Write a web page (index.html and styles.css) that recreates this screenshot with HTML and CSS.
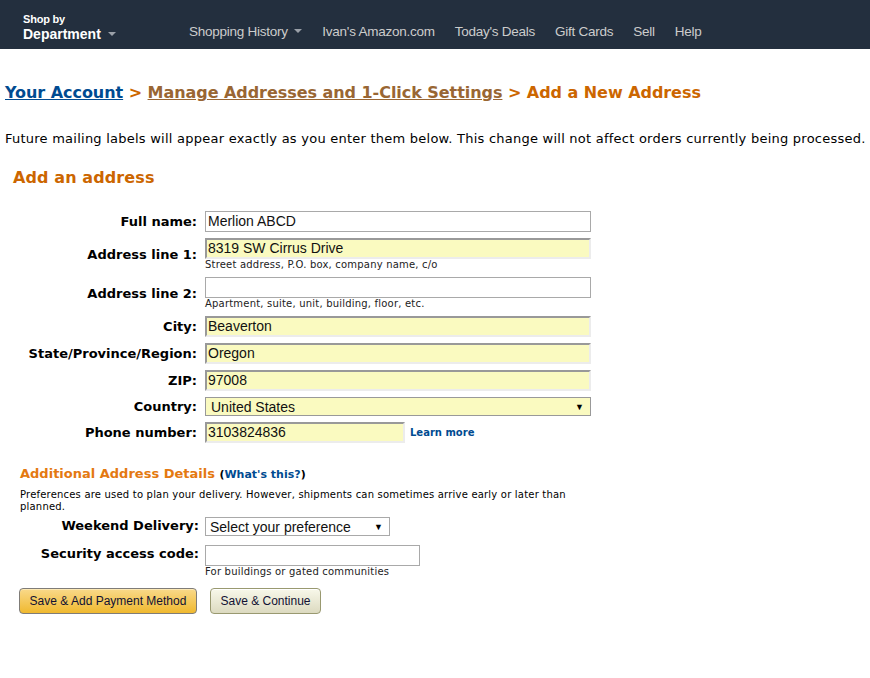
FILE: index.html
```html
<!DOCTYPE html>
<html lang="en">
<head>
<meta charset="utf-8">
<title>Add a New Address</title>
<link rel="stylesheet" href="styles.css">
</head>
<body>
<header class="nav">
  <div class="dept">
    <span class="dept-small">Shop by</span>
    <span class="dept-big">Department <span class="caret"></span></span>
  </div>
  <nav class="links">
    <a class="link">Shopping History <span class="caret"></span></a>
    <a class="link">Ivan's Amazon.com</a>
    <a class="link">Today's Deals</a>
    <a class="link">Gift Cards</a>
    <a class="link">Sell</a>
    <a class="link">Help</a>
  </nav>
</header>

<main class="page">
  <h1 class="crumbs"><a class="crumb-acct">Your Account</a> &gt; <a class="crumb-manage">Manage Addresses and 1-Click Settings</a> &gt; Add a New Address</h1>

  <p class="intro">Future mailing labels will appear exactly as you enter them below. This change will not affect orders currently being processed.</p>

  <h2 class="section-title">Add an address</h2>

  <div class="form">
    <label class="lbl">Full name:</label>
    <div class="field"><div class="inp white w-full">Merlion ABCD</div></div>

    <label class="lbl">Address line 1:</label>
    <div class="field"><div class="inp yellow w-full">8319 SW Cirrus Drive</div><div class="hint">Street address, P.O. box, company name, c/o</div></div>

    <label class="lbl">Address line 2:</label>
    <div class="field"><div class="inp white w-full"></div><div class="hint">Apartment, suite, unit, building, floor, etc.</div></div>

    <label class="lbl">City:</label>
    <div class="field"><div class="inp yellow w-full">Beaverton</div></div>

    <label class="lbl">State/Province/Region:</label>
    <div class="field"><div class="inp yellow w-full">Oregon</div></div>

    <label class="lbl">ZIP:</label>
    <div class="field"><div class="inp yellow w-full">97008</div></div>

    <label class="lbl">Country:</label>
    <div class="field"><div class="sel yellow-sel w-full"><span>United States</span><span class="tri">&#9660;</span></div></div>

    <label class="lbl">Phone number:</label>
    <div class="field row"><div class="inp yellow w-phone">3103824836</div><a class="learn">Learn more</a></div>
  </div>

  <h3 class="extra-title">Additional Address Details <span class="whats">(<a>What's this?</a>)</span></h3>
  <p class="pref">Preferences are used to plan your delivery. However, shipments can sometimes arrive early or later than planned.</p>

  <div class="form2">
    <label class="lbl2">Weekend Delivery:</label>
    <div class="field"><div class="sel white-sel w-week"><span>Select your preference</span><span class="tri">&#9660;</span></div></div>

    <label class="lbl2">Security access code:</label>
    <div class="field"><div class="inp white w-code"></div><div class="hint">For buildings or gated communities</div></div>
  </div>

  <div class="buttons">
    <button class="btn btn-primary">Save &amp; Add Payment Method</button>
    <button class="btn btn-secondary">Save &amp; Continue</button>
  </div>
</main>
</body>
</html>
```
FILE: styles.css
```css
html, body {
  margin: 0;
  padding: 0;
  background: #fff;
}
body {
  font-family: "DejaVu Sans", Verdana, sans-serif;
  color: #000;
}

/* top nav */
.nav {
  height: 49px;
  background: #232f3e;
  display: flex;
  align-items: flex-start;
  font-family: "Liberation Sans", Arial, sans-serif;
}
.dept {
  display: flex;
  flex-direction: column;
  padding: 13px 0 0 23px;
  width: 166px;
  color: #fff;
  font-weight: bold;
}
.dept-small {
  font-size: 11px;
  line-height: 13px;
  letter-spacing: -0.2px;
}
.dept-big {
  font-size: 14px;
  line-height: 16px;
}
.caret {
  display: inline-block;
  width: 0;
  height: 0;
  border-left: 4px solid transparent;
  border-right: 4px solid transparent;
  border-top: 4px solid #9aa0a8;
  vertical-align: middle;
  margin-left: 3px;
  margin-top: -2px;
}
.links {
  display: flex;
  gap: 20px;
  padding-top: 24px;
}
.link {
  color: #ccc;
  font-size: 13.5px;
  line-height: 16px;
  letter-spacing: -0.25px;
}

/* page */
.page {
  padding: 0 0 0 5px;
}
.crumbs {
  margin: 33px 0 0;
  font-size: 16px;
  line-height: 22px;
  font-weight: bold;
  color: #cc6600;
  letter-spacing: -0.05px;
}
.crumb-acct {
  color: #004b91;
  text-decoration: underline;
}
.crumb-manage {
  color: #996633;
  text-decoration: underline;
}
.intro {
  margin: 27px 0 0;
  font-size: 13px;
  line-height: 16px;
  color: #000;
  white-space: nowrap;
  letter-spacing: 0.24px;
}
.section-title {
  margin: 20px 0 0 8px;
  font-size: 16px;
  line-height: 22px;
  font-weight: bold;
  color: #cc6600;
  letter-spacing: 0.1px;
}

/* main form grid */
.form {
  display: grid;
  grid-template-columns: 192px auto;
  column-gap: 8px;
  row-gap: 6px;
  align-items: center;
  margin-top: 22px;
}
.lbl {
  text-align: right;
  font-size: 13px;
  font-weight: bold;
  color: #000;
  line-height: 16px;
}
.field {
  display: flex;
  flex-direction: column;
  align-items: flex-start;
}
.field.row {
  flex-direction: row;
  align-items: center;
}
.inp {
  box-sizing: border-box;
  height: 21px;
  font-family: "Liberation Sans", Arial, sans-serif;
  font-size: 14px;
  line-height: 17px;
  color: #111;
  padding: 0 2px;
  white-space: nowrap;
}
.white {
  background: #fff;
  border: 1px solid #a9a9a9;
  padding-top: 1px;
}
.yellow {
  background: #fafac0;
  border-top: 2px solid #999;
  border-left: 2px solid #999;
  border-bottom: 2px solid #ececec;
  border-right: 2px solid #ececec;
  padding-left: 1px;
}
.w-full { width: 386px; }
.w-phone { width: 200px; }
.w-code { width: 215px; }
.w-week { width: 185px; }
.hint {
  font-size: 10px;
  line-height: 12px;
  color: #222;
  letter-spacing: 0.2px;
  margin-top: 0;
}
.sel {
  box-sizing: border-box;
  height: 19px;
  display: flex;
  justify-content: space-between;
  align-items: center;
  font-family: "Liberation Sans", Arial, sans-serif;
  font-size: 14px;
  color: #111;
  padding: 0 6px 0 5px;
  border: 1px solid #a9a9a9;
}
.yellow-sel {
  background: #fafac0;
  border-color: #999;
}
.white-sel {
  background: #fff;
  border-color: #a9a9a9;
  padding-left: 4px;
}
.tri {
  font-size: 9px;
  color: #000;
}
.learn {
  margin-left: 5px;
  font-size: 10px;
  font-weight: bold;
  color: #004b91;
}

/* additional details */
.extra-title {
  margin: 23px 0 0 15px;
  font-size: 13px;
  line-height: 16px;
  font-weight: bold;
  color: #e47911;
}
.whats {
  font-size: 11px;
  color: #000;
}
.whats a {
  color: #004b91;
}
.pref {
  margin: 6px 0 0 15px;
  width: 550px;
  font-size: 10px;
  line-height: 12px;
  color: #000;
  letter-spacing: 0.2px;
}
.form2 {
  display: grid;
  grid-template-columns: 194px auto;
  column-gap: 6px;
  row-gap: 9px;
  align-items: start;
  margin-top: 4px;
}
.lbl2 {
  text-align: right;
  font-size: 13px;
  font-weight: bold;
  line-height: 16px;
  padding-top: 1px;
}
.form2 .white-sel {
  height: 19px;
}

/* buttons */
.buttons {
  display: flex;
  gap: 13px;
  margin: 10px 0 0 14px;
}
.btn {
  font-family: "Liberation Sans", Arial, sans-serif;
  font-size: 12px;
  color: #111133;
  height: 26px;
  border-radius: 4px;
  padding: 0 8px;
  cursor: pointer;
}
.btn-primary {
  width: 178px;
  background: linear-gradient(#f9d98a, #f0b92f);
  border: 1px solid #7f7c78;
  box-shadow: inset 0 1px 0 #fde9b4;
}
.btn-secondary {
  width: 111px;
  background: linear-gradient(#f8f8ea, #dcdac0);
  border: 1px solid #999970;
  box-shadow: inset 0 1px 0 #fff;
}
```
